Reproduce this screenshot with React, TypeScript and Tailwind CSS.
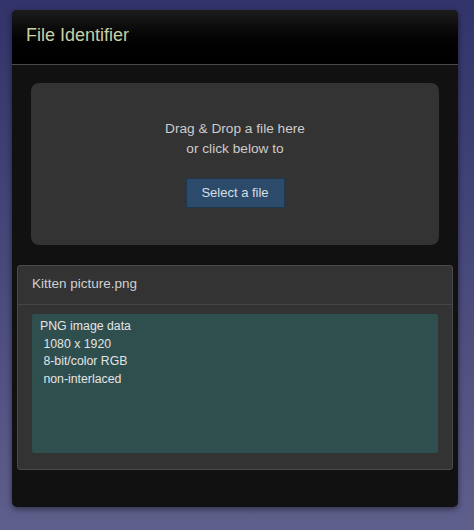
export default function App() {
  return (
    <div
      className="min-h-[530px] w-full bg-gradient-to-b from-[#32346a] to-[#5f5f8c] pt-[10px] pr-[16px] pb-[23px] pl-[12px]"
      style={{ fontFamily: '"Liberation Sans", Arial, sans-serif' }}
    >
      <div className="overflow-hidden rounded-[5px] bg-[#111111] shadow-[0_2px_6px_rgba(0,0,0,0.5)]">
        <header className="flex h-[55px] items-center border-b border-[#4a4a4a] bg-gradient-to-b from-[#1c1c1c] to-[#000000] px-[14px] pb-[3px]">
          <h1 className="text-[18px] text-[#c8d0a4]">File Identifier</h1>
        </header>

        <div className="px-[5px] pt-[18px] pb-[37px]">
          <div className="mx-[14px] flex h-[162px] flex-col items-center rounded-[8px] bg-[#333333] pt-[36px]">
            <p className="text-center text-[13.7px] leading-[20px] text-[#cccccc]">
              Drag &amp; Drop a file here
              <br />
              or click below to
            </p>
            <button
              type="button"
              className="mt-[19px] h-[30px] w-[99px] border border-[#1f3850] bg-[#2c4b6b] text-[13px] text-[#d8dde3]"
            >
              Select a file
            </button>
          </div>

          <section className="mt-[20px] rounded-[3px] border border-[#4a4a4a] bg-[#333333]">
            <div className="flex h-[39px] items-center border-b border-[#444444] px-[14px] pb-[2px] text-[13.5px] text-[#d0d0d0]">
              Kitten picture.png
            </div>
            <div className="px-[14px] pt-[9px] pb-[16px]">
              <pre
                className="h-[139px] rounded-[2px] bg-[#2f4f4f] px-[8px] pt-[4px] text-[12.3px] leading-[17.6px] text-[#e4e4e4]"
                style={{ fontFamily: '"Liberation Sans", Arial, sans-serif' }}
              >
                {"PNG image data\n 1080 x 1920\n 8-bit/color RGB\n non-interlaced"}
              </pre>
            </div>
          </section>
        </div>
      </div>
    </div>
  );
}
